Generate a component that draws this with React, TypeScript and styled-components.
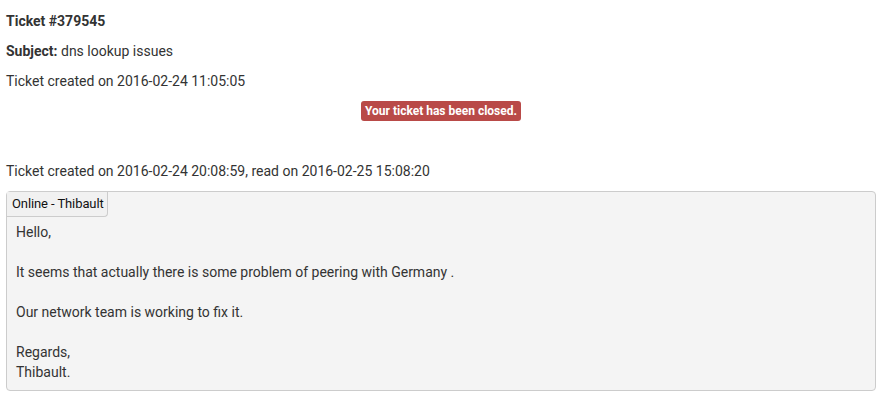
import React from "react";
import styled, { createGlobalStyle } from "styled-components";

const GlobalStyle = createGlobalStyle`
  body {
    margin: 0;
    background: #fff;
    font-family: Roboto, "Liberation Sans", sans-serif;
    font-size: 14px;
    line-height: 20px;
    color: #333;
  }
`;

const Page = styled.div`
  width: 870px;
  padding: 11px 6px;
`;

const Line = styled.div<{ $bold?: boolean }>`
  margin-bottom: 10px;
  font-weight: ${(p) => (p.$bold ? 700 : 400)};
`;

const StatusRow = styled.div`
  display: flex;
  justify-content: center;
  margin: 0 0 40px;
`;

const Badge = styled.span`
  display: inline-block;
  background: #b94a48;
  color: #fff;
  font-size: 12px;
  font-weight: 700;
  line-height: 20px;
  padding: 0 4px;
  border-radius: 3px;
`;

const Message = styled.div`
  background: #f4f4f4;
  border: 1px solid #ccc;
  border-radius: 4px;
  padding-bottom: 8px;
`;

const Author = styled.div`
  display: inline-block;
  font-size: 13px;
  line-height: 24px;
  letter-spacing: -0.1px;
  padding: 0 3px 0 5px;
  color: #111;
  background: #f1f1f1;
  border-right: 1px solid #ccc;
  border-bottom: 1px solid #ccc;
  border-bottom-right-radius: 4px;
`;

const Body = styled.div`
  padding: 5px 9px 0;
  p {
    margin: 0 0 20px;
  }
  p:last-child {
    margin-bottom: 0;
  }
`;

export default function App() {
  return (
    <>
      <GlobalStyle />
      <Page>
        <Line $bold>Ticket #379545</Line>
        <Line>
          <b>Subject:</b> dns lookup issues
        </Line>
        <Line>Ticket created on 2016-02-24 11:05:05</Line>
        <StatusRow>
          <Badge>Your ticket has been closed.</Badge>
        </StatusRow>
        <Line>Ticket created on 2016-02-24 20:08:59, read on 2016-02-25 15:08:20</Line>
        <Message>
          <Author>Online - Thibault</Author>
          <Body>
            <p>Hello,</p>
            <p>It seems that actually there is some problem of peering with Germany .</p>
            <p>Our network team is working to fix it.</p>
            <p>
              Regards,
              <br />
              Thibault.
            </p>
          </Body>
        </Message>
      </Page>
    </>
  );
}
